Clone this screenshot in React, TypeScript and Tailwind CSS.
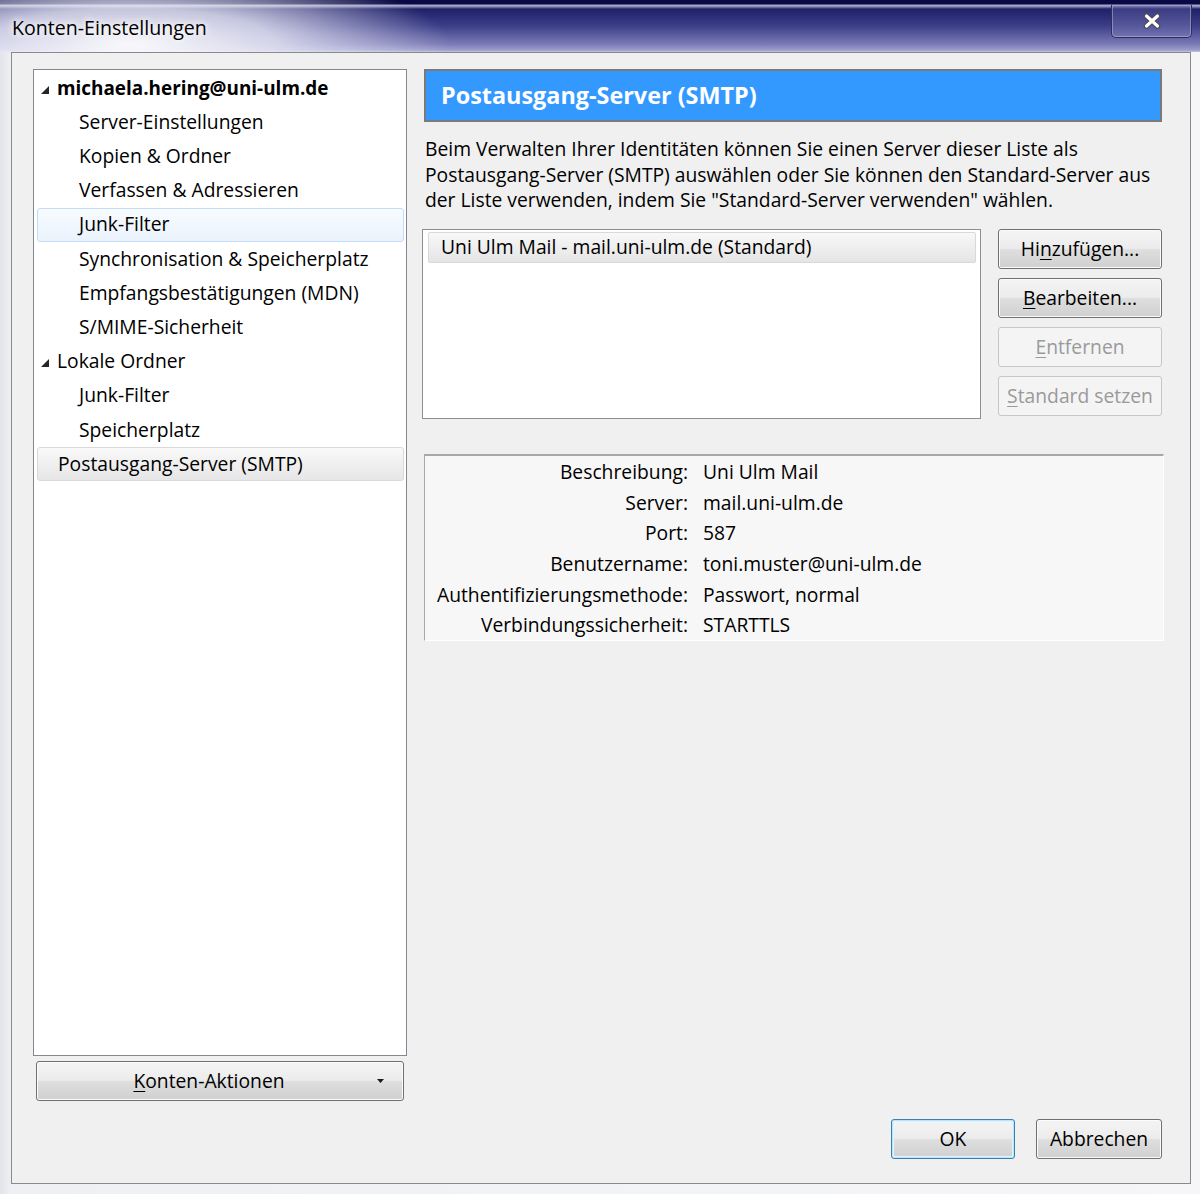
import React from 'react'

const btn =
  'h-[40px] flex items-center justify-center rounded-[3px] border border-[#707070] bg-[linear-gradient(to_bottom,#f4f4f4_0%,#ececec_48%,#dedede_52%,#d0d0d0_100%)] shadow-[inset_0_0_0_1px_#fbfbfb] text-black'

const btnDisabled =
  'h-[40px] flex items-center justify-center rounded-[3px] border border-[#c5c8ca] bg-[#f4f4f4] text-[#9a9a9a]'

const Key = ({ children }: { children: React.ReactNode }) => (
  <span className="underline underline-offset-[3px] decoration-1">{children}</span>
)

const Expander = () => (
  <svg width="10" height="10" viewBox="0 0 10 10" className="mt-[3px] shrink-0">
    <polygon points="9,1 9,9 1,9" fill="#262626" />
  </svg>
)

type TreeRow = { label: string; level: 0 | 1; expander?: boolean; bold?: boolean; state?: 'hover' | 'selected' }

const treeRows: TreeRow[] = [
  { label: 'michaela.hering@uni-ulm.de', level: 0, expander: true, bold: true },
  { label: 'Server-Einstellungen', level: 1 },
  { label: 'Kopien & Ordner', level: 1 },
  { label: 'Verfassen & Adressieren', level: 1 },
  { label: 'Junk-Filter', level: 1, state: 'hover' },
  { label: 'Synchronisation & Speicherplatz', level: 1 },
  { label: 'Empfangsbestätigungen (MDN)', level: 1 },
  { label: 'S/MIME-Sicherheit', level: 1 },
  { label: 'Lokale Ordner', level: 0, expander: true },
  { label: 'Junk-Filter', level: 1 },
  { label: 'Speicherplatz', level: 1 },
  { label: 'Postausgang-Server (SMTP)', level: 0, state: 'selected' },
]

const details = [
  ['Beschreibung:', 'Uni Ulm Mail'],
  ['Server:', 'mail.uni-ulm.de'],
  ['Port:', '587'],
  ['Benutzername:', 'toni.muster@uni-ulm.de'],
  ['Authentifizierungsmethode:', 'Passwort, normal'],
  ['Verbindungssicherheit:', 'STARTTLS'],
]

const TitleBar = () => (
  <div className="h-[52px] shrink-0 flex items-start relative bg-[radial-gradient(ellipse_320px_80px_at_130px_44px,rgba(255,255,255,0.95)_0%,rgba(236,236,248,0.8)_45%,rgba(255,255,255,0)_100%),linear-gradient(to_bottom,#090a45_0px,#090a45_4px,#a4a4c6_5px,#a4a4c6_6px,#1e2068_9px,#3c3e88_26px,#7a7ab6_44px,#9c9ccc_50px,#c4c4dc_52px)]">
    <div className="pl-[12px] pt-[14px] text-[19.6px] leading-[28px] text-black [text-shadow:0_0_6px_#fff,0_0_10px_#fff]">
      Konten-Einstellungen
    </div>
    <div className="ml-auto mr-[8px] mt-[5px] w-[81px] h-[33px] rounded-b-[5px] border border-t-0 border-[#2c2f5e] shadow-[inset_0_0_0_1px_rgba(200,200,230,0.45)] bg-[linear-gradient(to_bottom,rgba(80,82,150,0.5),rgba(130,130,190,0.5))] flex items-center justify-center">
      <svg width="18" height="16" viewBox="0 0 18 16">
        <path d="M3.5 3 L14.5 13 M14.5 3 L3.5 13" stroke="#4a4a58" strokeWidth="5.5" strokeLinecap="round" />
        <path d="M3.5 3 L14.5 13 M14.5 3 L3.5 13" stroke="#ffffff" strokeWidth="3.2" strokeLinecap="round" />
      </svg>
    </div>
  </div>
)

export default function App() {
  return (
    <div className="w-[1200px] h-[1194px] flex flex-col overflow-hidden bg-[#eceef2] font-['Open_Sans','Noto_Sans',sans-serif] text-[19.3px] text-black">
      <TitleBar />
      <div className="flex-1 flex pl-[11px] pr-[9px] pb-[10px] bg-[linear-gradient(to_right,#e2e4ea_0px,#eef0f4_11px,#f6f6f8_100%)]">
        <div className="flex-1 min-w-0 flex flex-col border border-[#8a8a8a] bg-[#f0f0f0] pl-[21px] pr-[26px] pt-[16px] pb-[24px]">
          <div className="flex flex-1 min-h-0">
            {/* tree */}
            <div className="w-[374px] shrink-0 flex flex-col">
              <div className="h-[987px] border border-[#828790] bg-white pt-[1px]">
                {treeRows.map((r, i) => {
                  const state =
                    r.state === 'hover'
                      ? 'border-[#c3dcf8] bg-[linear-gradient(to_bottom,#f7fbff,#eaf3fd)]'
                      : r.state === 'selected'
                        ? 'border-[#d9d9d9] bg-[linear-gradient(to_bottom,#f9f9f9,#e6e6e6)]'
                        : 'border-transparent'
                  return (
                    <div
                      key={i}
                      className={`h-[34.2px] ml-[3px] mr-[2px] rounded-[3px] border flex items-center whitespace-nowrap ${state} ${
                        r.level === 1 ? 'pl-[41px]' : r.expander ? 'pl-[2px] gap-[7px]' : 'pl-[20px]'
                      } ${r.bold ? 'font-bold text-[18.9px]' : ''}`}
                    >
                      {r.expander && <Expander />}
                      <span>{r.label}</span>
                    </div>
                  )
                })}
              </div>
              <button className={`${btn} mt-[5px] mx-[3px] pl-[4px] pr-[19px] !justify-between`}>
                <span className="flex-1 text-center">
                  <Key>K</Key>onten-Aktionen
                </span>
                <svg width="7" height="4" viewBox="0 0 7 4">
                  <polygon points="0,0 7,0 3.5,4" fill="#1a1a1a" />
                </svg>
              </button>
            </div>

            {/* right column */}
            <div className="flex-1 min-w-0 ml-[15px] flex flex-col">
              <div className="mx-[2px] h-[53px] border-2 border-[#7a7a7a] bg-[#3399ff] flex items-center pl-[15px] text-white font-bold text-[23.4px]">
                Postausgang-Server (SMTP)
              </div>
              <p className="mt-[14px] pl-[3px] leading-[25.5px] whitespace-nowrap">
                Beim Verwalten Ihrer Identitäten können Sie einen Server dieser Liste als
                <br />
                Postausgang-Server (SMTP) auswählen oder Sie können den Standard-Server aus
                <br />
                der Liste verwenden, indem Sie "Standard-Server verwenden" wählen.
              </p>
              <div className="mt-[16.5px] flex">
                <div className="w-[559px] h-[190px] border border-[#8e8f8f] bg-white pt-[2px] pl-[5px] pr-[4px]">
                  <div className="h-[31px] rounded-[2px] border border-[#d9d9d9] bg-[linear-gradient(to_bottom,#f8f8f8,#e5e5e5)] flex items-center pl-[12px] whitespace-nowrap">
                    Uni Ulm Mail - mail.uni-ulm.de (Standard)
                  </div>
                </div>
                <div className="ml-[17px] w-[164px] flex flex-col gap-[9px]">
                  <button className={btn}>
                    Hi<Key>n</Key>zufügen...
                  </button>
                  <button className={btn}>
                    <Key>B</Key>earbeiten...
                  </button>
                  <button className={btnDisabled}>
                    <Key>E</Key>ntfernen
                  </button>
                  <button className={btnDisabled}>
                    <Key>S</Key>tandard setzen
                  </button>
                </div>
              </div>
              <div className="mt-[35px] ml-[2px] h-[187px] border-t-2 border-l border-r border-b border-t-[#a7a7a7] border-l-[#a7a7a7] border-r-white border-b-white bg-[#f7f7f7] pt-[1px]">
                <div className="grid grid-cols-[263px_1fr] gap-x-[15px]">
                  {details.map(([k, v]) => (
                    <React.Fragment key={k}>
                      <div className="h-[30.7px] flex items-center justify-end whitespace-nowrap">{k}</div>
                      <div className="h-[30.7px] flex items-center whitespace-nowrap">{v}</div>
                    </React.Fragment>
                  ))}
                </div>
              </div>
            </div>
          </div>

          {/* footer */}
          <div className="mt-[18px] flex justify-end gap-[21px] pr-[2px]">
            <button className={`${btn} w-[124px] !border-[#3c7fb1] !shadow-[inset_0_0_0_1px_#b5e6fb,inset_0_0_0_2px_#e0f4fd]`}>OK</button>
            <button className={`${btn} w-[126px]`}>Abbrechen</button>
          </div>
        </div>
      </div>
    </div>
  )
}
